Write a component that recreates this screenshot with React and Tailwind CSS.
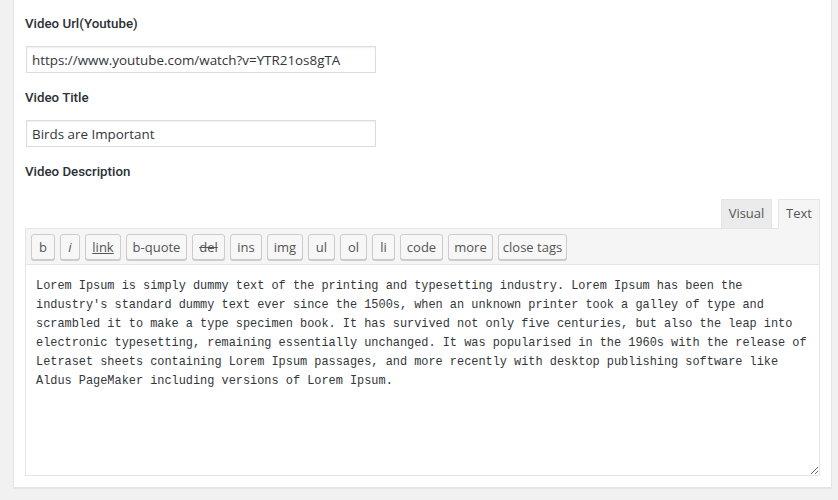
import { useState } from 'react'

const UI_FONT = "font-['Open_Sans','Noto_Sans',sans-serif]"

const QUICKTAGS = [
  { label: 'b', width: 'w-[24px]' },
  { label: 'i', width: 'w-[20px]', className: 'italic' },
  { label: 'link', width: 'w-[36px]', className: 'underline' },
  { label: 'b-quote', width: 'w-[61px]' },
  { label: 'del', width: 'w-[33px]', className: 'line-through' },
  { label: 'ins', width: 'w-[32px]' },
  { label: 'img', width: 'w-[36px]' },
  { label: 'ul', width: 'w-[27px]' },
  { label: 'ol', width: 'w-[27px]' },
  { label: 'li', width: 'w-[23px]' },
  { label: 'code', width: 'w-[43px]' },
  { label: 'more', width: 'w-[45px]' },
  { label: 'close tags', width: 'w-[69px]' },
]

const DESCRIPTION = [
  'Lorem Ipsum is simply dummy text of the printing and typesetting industry. Lorem Ipsum has been the',
  "industry's standard dummy text ever since the 1500s, when an unknown printer took a galley of type and",
  'scrambled it to make a type specimen book. It has survived not only five centuries, but also the leap into',
  'electronic typesetting, remaining essentially unchanged. It was popularised in the 1960s with the release of',
  'Letraset sheets containing Lorem Ipsum passages, and more recently with desktop publishing software like',
  'Aldus PageMaker including versions of Lorem Ipsum.',
].join('\n')

function FieldLabel({ children }) {
  return (
    <label className="block h-5 leading-5 font-['Roboto',sans-serif] text-[13.3px] font-medium text-[#2c3136]">
      {children}
    </label>
  )
}

function TextInput({ value, onChange }) {
  return (
    <input
      type="text"
      value={value}
      onChange={(e) => onChange(e.target.value)}
      className="block ml-px w-[350px] h-[27px] px-[5px] bg-white border border-[#dddddd] shadow-[inset_0_1px_2px_rgba(0,0,0,0.07)] text-[13.4px] text-[#32373c] focus:outline-none"
    />
  )
}

export default function App() {
  const [videoUrl, setVideoUrl] = useState('https://www.youtube.com/watch?v=YTR21os8gTA')
  const [videoTitle, setVideoTitle] = useState('Birds are Important')
  const [description, setDescription] = useState(DESCRIPTION)
  const [mode, setMode] = useState('text')

  return (
    <div className={`min-h-[500px] bg-[#f1f1f1] pl-[13px] ${UI_FONT}`}>
      <div className="w-[819px] bg-white border border-t-0 border-[#e5e5e5] shadow-[0_1px_1px_rgba(0,0,0,0.04)] px-[11px] pt-[14px] pb-[11px]">
        <FieldLabel>Video Url(Youtube)</FieldLabel>
        <div className="mt-[12px]">
          <TextInput value={videoUrl} onChange={setVideoUrl} />
        </div>

        <div className="mt-[15px]">
          <FieldLabel>Video Title</FieldLabel>
        </div>
        <div className="mt-[12px]">
          <TextInput value={videoTitle} onChange={setVideoTitle} />
        </div>

        <div className="mt-[15px]">
          <FieldLabel>Video Description</FieldLabel>
        </div>

        <div className="mt-[17px]">
          <div className="flex justify-end gap-[6px] h-[29px]">
            <button
              onClick={() => setMode('visual')}
              className={`w-[51px] h-[30px] border border-[#e5e5e5] text-[13px] text-[#555] ${mode === 'visual' ? 'bg-[#f5f5f5] border-b-[#f5f5f5]' : 'bg-[#ebebeb]'}`}
            >
              Visual
            </button>
            <button
              onClick={() => setMode('text')}
              className={`w-[42px] h-[30px] border border-[#e5e5e5] text-[13px] text-[#555] ${mode === 'text' ? 'bg-[#f5f5f5] border-b-[#f5f5f5] relative z-10' : 'bg-[#ebebeb]'}`}
            >
              Text
            </button>
          </div>

          <div className="flex gap-[5px] h-[37px] pl-[5px] pt-[5px] bg-[#f5f5f5] border border-[#e5e5e5]">
            {QUICKTAGS.map((tag) => (
              <button
                key={tag.label}
                className={`${tag.width} h-[26px] shrink-0 bg-[#f7f7f7] border border-[#cccccc] rounded-[3px] shadow-[0_1px_0_#cccccc] text-[13px] leading-[22px] text-[#555] whitespace-nowrap`}
              >
                <span className={tag.className}>{tag.label}</span>
              </button>
            ))}
          </div>

          <textarea
            value={description}
            onChange={(e) => setDescription(e.target.value)}
            wrap="off"
            className="block w-full h-[212px] -mt-px px-[10px] pt-[12px] bg-white border border-[#e5e5e5] resize-y overflow-hidden font-['Liberation_Mono',monospace] text-[11.9px] leading-[19px] text-[#32373c] focus:outline-none"
          />
        </div>
      </div>
    </div>
  )
}
